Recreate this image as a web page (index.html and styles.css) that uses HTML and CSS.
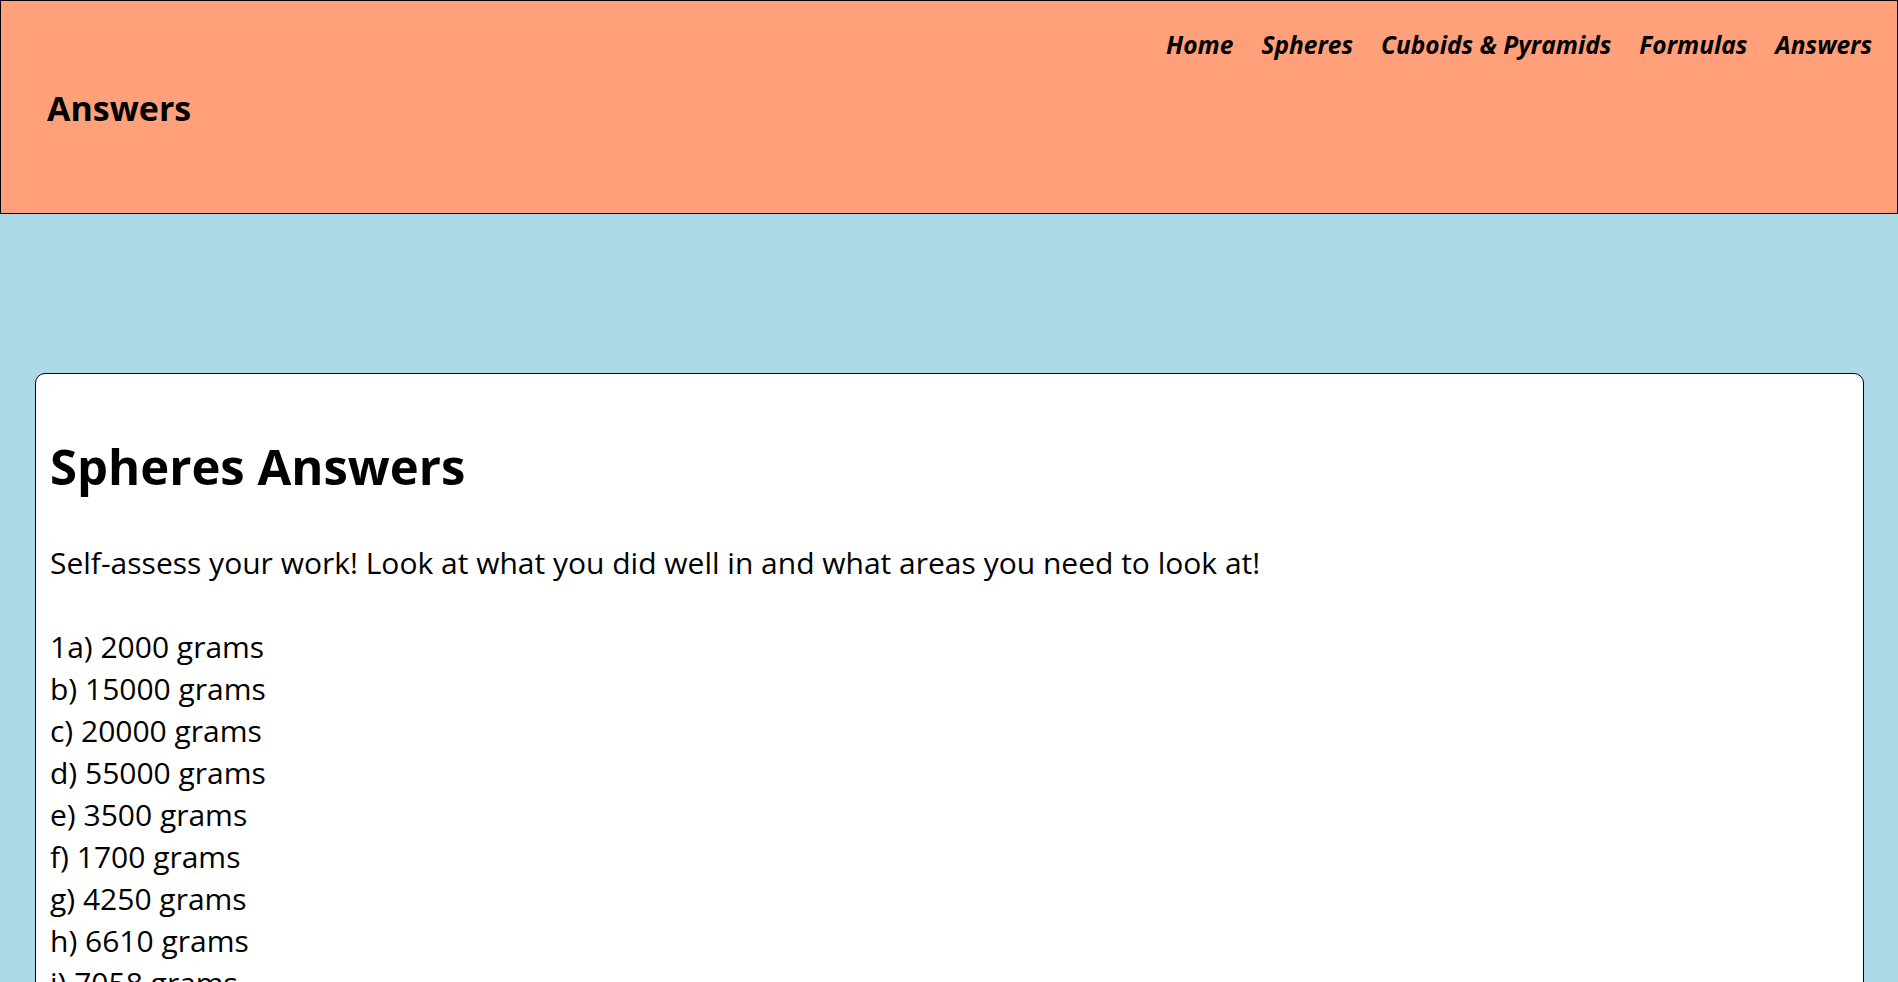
FILE: index.html
```html
<!DOCTYPE html>
<html lang="en">
<head>
<meta charset="utf-8">
<title>Answers</title>
<link rel="stylesheet" href="styles.css">
</head>
<body>
<header class="site-header">
  <nav class="nav">
    <a href="#" class="nav-link">Home</a>
    <a href="#" class="nav-link">Spheres</a>
    <a href="#" class="nav-link">Cuboids &amp; Pyramids</a>
    <a href="#" class="nav-link">Formulas</a>
    <a href="#" class="nav-link">Answers</a>
  </nav>
  <h1 class="site-title">Answers</h1>
</header>
<main class="main">
  <section class="card">
    <h2 class="card-title">Spheres Answers</h2>
    <p class="card-text">Self-assess your work! Look at what you did well in and what areas you need to look at!</p>
    <p class="card-text">1a) 2000 grams<br>b) 15000 grams<br>c) 20000 grams<br>d) 55000 grams<br>e) 3500 grams<br>f) 1700 grams<br>g) 4250 grams<br>h) 6610 grams<br>i) 7058 grams</p>
  </section>
</main>
</body>
</html>
```
FILE: styles.css
```css
html, body {
  margin: 0;
  padding: 0;
}
body {
  background: #add8e6;
  font-family: "Comic Sans MS", "Open Sans", "DejaVu Sans", sans-serif;
  color: #000;
}
.site-header {
  background: #ffa07a;
  border: 1px solid #000;
  height: 212px;
  display: flex;
  flex-direction: column;
}
.nav {
  display: flex;
  justify-content: flex-end;
  gap: 28px;
  padding: 30px 25px 0 0;
}
.nav-link {
  color: #000;
  text-decoration: none;
  font-weight: bold;
  font-style: italic;
  font-size: 24.5px;
  line-height: 28px;
}
.site-title {
  margin: 26px 0 0 46px;
  font-size: 34px;
  line-height: 46px;
  font-weight: bold;
}
.main {
  padding: 159px 34px 0 35px;
}
.card {
  background: #fff;
  border: 1px solid #000;
  border-radius: 10px;
  padding: 62px 14px 200px;
}
.card-title {
  margin: 0 0 46px;
  font-size: 49px;
  line-height: 60px;
  font-weight: bold;
}
.card-text {
  margin: 0 0 42px;
  font-size: 30px;
  line-height: 42px;
}
```
